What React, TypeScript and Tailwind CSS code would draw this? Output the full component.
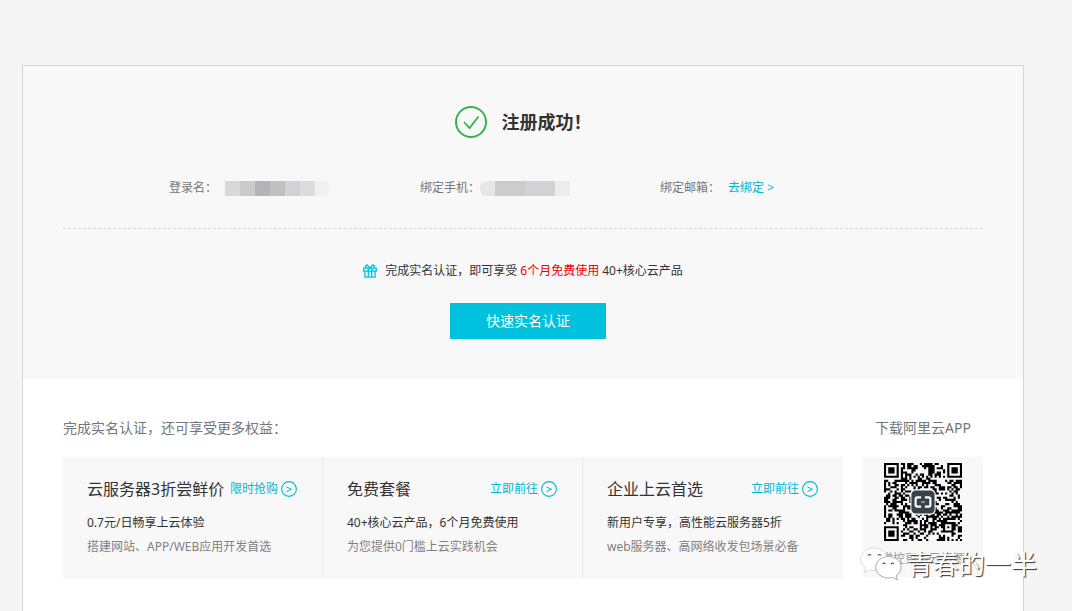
import { useMemo } from 'react'

const offers = [
  {
    title: '云服务器3折尝鲜价',
    action: '限时抢购',
    lead: '0.7元/日畅享上云体验',
    note: '搭建网站、APP/WEB应用开发首选',
  },
  {
    title: '免费套餐',
    action: '立即前往',
    lead: '40+核心云产品，6个月免费使用',
    note: '为您提供0门槛上云实践机会',
  },
  {
    title: '企业上云首选',
    action: '立即前往',
    lead: '新用户专享，高性能云服务器5折',
    note: 'web服务器、高网络收发包场景必备',
  },
]

function SuccessIcon() {
  return (
    <svg width="32" height="32" viewBox="0 0 32 32" fill="none" stroke="#35b34a" aria-hidden="true">
      <circle cx="16" cy="16" r="15" strokeWidth="2" />
      <path d="M9 16l5.500 6 9-11.500" strokeWidth="1.8" />
    </svg>
  )
}

function GiftIcon() {
  return (
    <svg width="14" height="14" viewBox="0 0 14 14" fill="none" stroke="#00c1de" strokeWidth="1.3" aria-hidden="true">
      <path d="M.7 4.2h12.6v3H.7zM1.9 7.2v6h10.2v-6M5.3 4.2v9M8.7 4.2v9" />
      <path d="M7 4L4 .8 2.300 2.300 3.600 4M7 4l3-3.200 1.700 1.500L10.400 4" />
    </svg>
  )
}

function ArrowIcon() {
  return (
    <svg width="16" height="16" viewBox="0 0 16 16" fill="none" stroke="#00b7d3" aria-hidden="true">
      <circle cx="8" cy="8" r="7.4" strokeWidth="1.1" />
      <path d="M5.500 6l5 2.300-5 2.300" strokeWidth="1" />
    </svg>
  )
}

const SIZE = 37

// Distance from a marker centre, ring by ring
const ring = (x: number, y: number, cx: number, cy: number) =>
  Math.max(Math.abs(x - cx), Math.abs(y - cy))

function buildModules() {
  let seed = 20177
  let path = ''
  for (let y = 0; y < SIZE; y++) {
    for (let x = 0; x < SIZE; x++) {
      seed = (seed * 1103515245 + 12345) % 2147483648
      let on = seed / 2147483648 < 0.52
      const finder = Math.min(ring(x, y, 3, 3), ring(x, y, 33, 3), ring(x, y, 3, 33))
      const align = ring(x, y, 30, 30)
      if (finder <= 4) on = finder !== 2 && finder !== 4
      else if (align <= 2) on = align !== 1
      else if (x === 6 || y === 6) on = (x + y) % 2 === 0
      if (on) path += `M${x} ${y}h1v1h-1z`
    }
  }
  return path
}

function QrCode() {
  const modules = useMemo(buildModules, [])
  return (
    <svg width="78" height="78" viewBox="0 0 37 37" role="img" aria-label="阿里云APP二维码">
      <path d={modules} fill="#000" />
      <rect x="12.500" y="12.500" width="12" height="12" rx="2.200" fill="#fff" />
      <rect x="13" y="13" width="11" height="11" rx="2" fill="#38424b" />
      <path
        d="M17.600 16.300h-1.800q-.8 0-.8.8v2.800q0 .8.8.8h1.800M19.400 16.300h1.800q.8 0 .8.8v2.800q0 .8-.8.8h-1.800"
        fill="none"
        stroke="#fff"
        strokeWidth="1"
      />
      <path d="M17.600 18.500h1.800" stroke="#9aa3a9" strokeWidth=".8" />
    </svg>
  )
}

function WechatIcon() {
  return (
    <svg width="42" height="34" viewBox="0 0 42 34" fill="#fff" stroke="#888" strokeWidth=".7" aria-hidden="true">
      <path
        d="M14 1C6.500 1 .7 6 .7 12.300c0 3.600 1.900 6.700 4.900 8.800L4.200 25.500l5.100-2.700c1.500.4 3 .6 4.700.6 7.500 0 13.300-5 13.300-11.200S21.500 1 14 1z"
        stroke="#d0d0d0"
      />
      <path d="M28.500 9.500c-7 0-12.700 4.800-12.700 10.700S21.500 31 28.500 31c1.500 0 2.900-.2 4.200-.6l4.800 2.500-1.400-4c3.100-2 5.100-5 5.100-8.700 0-5.900-5.700-10.700-12.700-10.700z" />
      <path
        d="M8 8.500q1.500-2 3 0M18 8.500q1.500-2 3 0M22.500 17q1.500-2 3 0M31 17q1.500-2 3 0"
        fill="none"
        stroke="#444"
        strokeWidth="1.1"
      />
    </svg>
  )
}

export default function App() {
  return (
    <div className="flex min-h-screen flex-col bg-[#f5f5f5] pt-[65px] pr-12 pl-[22px] font-['Noto_Sans','Noto_Sans_CJK_SC',sans-serif] text-xs text-[#333]">
      <main className="flex flex-1 flex-col border border-b-0 border-[#d5d5d5] bg-white">
        <section className="bg-[#f8f8f8] px-10 py-10">
          <div className="flex items-center justify-center gap-[15px]">
            <SuccessIcon />
            <h1 className="text-lg leading-8 font-bold">注册成功！</h1>
          </div>

          {/* Account details */}
          <dl className="mt-10 flex gap-[90px] border-b border-dashed border-[#d5d5d5] pb-[30px] pl-[106px] leading-5 text-[#73777a]">
            <div className="flex items-center gap-2">
              <dt>登录名：</dt>
              <dd className="flex h-[15px] overflow-hidden rounded-r-md" aria-label="已隐藏">
                <span className="w-[15px] bg-[#d8d8d8]" />
                <span className="w-[15px] bg-[#cbcbcb]" />
                <span className="w-[15px] bg-[#b4b4b7]" />
                <span className="w-[15px] bg-[#c0c0c0]" />
                <span className="w-[15px] bg-[#d2d1d5]" />
                <span className="w-[15px] bg-[#dcdcdc]" />
                <span className="w-[15px] bg-[#f0f1f1]" />
              </dd>
            </div>
            <div className="flex items-center">
              <dt>绑定手机：</dt>
              <dd className="flex h-[15px] overflow-hidden rounded-l-md" aria-label="已隐藏">
                <span className="w-[15px] bg-[#e6e6e6]" />
                <span className="w-[30px] bg-[#cdcccd]" />
                <span className="w-[30px] bg-[#d2d2d4]" />
                <span className="w-[15px] bg-[#ececec]" />
              </dd>
            </div>
            <div className="flex items-center gap-2">
              <dt>绑定邮箱：</dt>
              <dd>
                <a href="#email" className="text-[#00b7d3]">去绑定 &gt;</a>
              </dd>
            </div>
          </dl>

          <div className="mt-8 flex items-center justify-center gap-2">
            <GiftIcon />
            <p className="leading-5">
              完成实名认证，即可享受 <span className="text-[#f00000]">6个月免费使用</span> 40+核心云产品
            </p>
          </div>
          <div className="mt-[22px] flex justify-center pl-2.5">
            <button type="button" className="h-9 w-[156px] bg-[#00c1de] text-sm text-white">
              快速实名认证
            </button>
          </div>
        </section>

        <section className="flex gap-5 px-10 pt-[38px] pb-8">
          <div className="flex-1">
            <h2 className="text-sm leading-[22px] text-[#73777a]">完成实名认证，还可享受更多权益：</h2>
            <ul className="mt-[18px] grid grid-cols-3 divide-x divide-[#e8e8e8] bg-[#f8f8f8]">
              {offers.map((offer) => (
                <li key={offer.title} className="py-5 pr-[25px] pl-6 whitespace-nowrap">
                  <div className="flex items-center justify-between leading-6">
                    <h3 className="text-base">{offer.title}</h3>
                    <a href="#offer" className="flex items-center gap-[3px] text-[#00b7d3]">
                      {offer.action}
                      <ArrowIcon />
                    </a>
                  </div>
                  <p className="mt-2.5 leading-6">{offer.lead}</p>
                  <p className="leading-6 text-[#808080]">{offer.note}</p>
                </li>
              ))}
            </ul>
          </div>

          <aside className="w-[120px]">
            <h2 className="text-center text-sm leading-[22px] text-[#73777a]">下载阿里云APP</h2>
            <div className="relative mt-[18px] flex h-[120px] flex-col items-center bg-[#f8f8f8] pt-1.5">
              <QrCode />
              <p className="mt-2 leading-5 text-[#999]">掌控更多云资源</p>
              {/* Account watermark over the panel */}
              <div className="absolute top-[90px] -left-[3px] flex items-center gap-[5px] whitespace-nowrap">
                <WechatIcon />
                <span className="text-[26px] leading-[34px] text-white [text-shadow:1px_1px_1px_#333]">
                  青春的一半
                </span>
              </div>
            </div>
          </aside>
        </section>
      </main>
    </div>
  )
}
